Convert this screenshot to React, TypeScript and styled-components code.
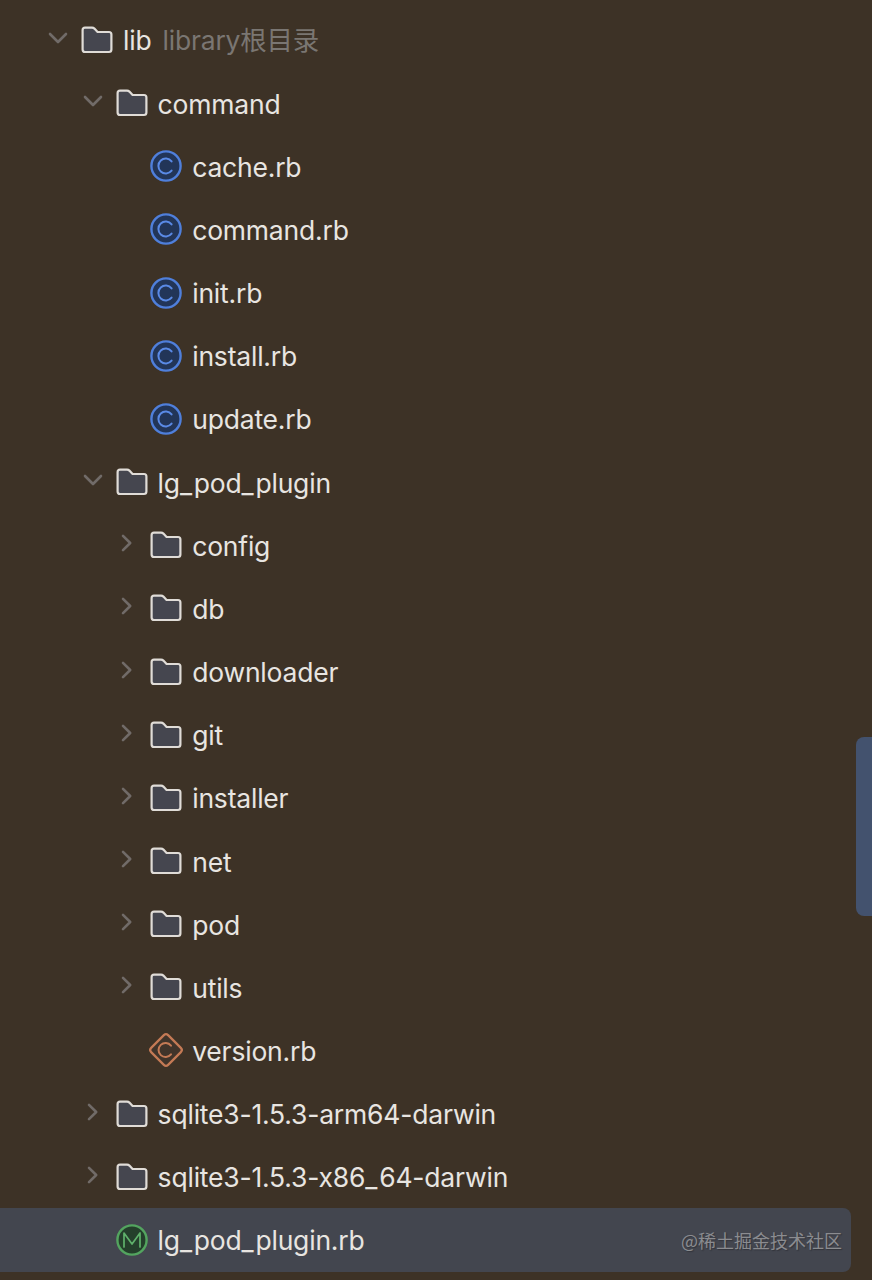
import React from "react";
import styled, { createGlobalStyle } from "styled-components";

const Global = createGlobalStyle`
  html, body { margin: 0; padding: 0; background: #3d3226; }
  #root { width: 872px; height: 1280px; }
`;

const Page = styled.div`
  position: relative;
  width: 872px;
  height: 1280px;
  overflow: hidden;
  background: #3d3226;
  padding-top: 8.4px;
  box-sizing: border-box;
  font-family: Inter, "Liberation Sans", "Noto Sans CJK SC", sans-serif;
`;

const List = styled.ul`
  margin: 0;
  padding: 0;
  list-style: none;
  display: flex;
  flex-direction: column;
`;

const Row = styled.li<{ $level: number; $selected?: boolean }>`
  display: flex;
  align-items: center;
  box-sizing: border-box;
  height: 63.16px;
  padding-left: ${(p) => 48 + p.$level * 34.6}px;
  margin-right: ${(p) => (p.$selected ? 21 : 0)}px;
  background: ${(p) => (p.$selected ? "#43464f" : "transparent")};
  border-radius: ${(p) => (p.$selected ? "0 8px 8px 0" : "0")};
`;

const ChevronSlot = styled.span`
  flex: 0 0 33px;
  width: 33px;
  height: 24px;
  display: flex;
  align-items: center;
  padding-bottom: 4px;
  box-sizing: border-box;
`;

const IconSlot = styled.span`
  flex: 0 0 32px;
  width: 32px;
  height: 36px;
  display: flex;
  align-items: center;
  justify-content: center;
  margin-right: 10px;
`;

const Name = styled.span`
  font-size: 26.5px;
  line-height: 36px;
  padding-top: 1px;
  color: #e8e5e1;
  letter-spacing: -0.2px;
  white-space: nowrap;
`;

const Underscore = styled.span`
  letter-spacing: 1.8px;
`;

const Hint = styled.span`
  font-size: 26.5px;
  line-height: 36px;
  padding-top: 1px;
  color: #7a7672;
  margin-left: 11px;
  letter-spacing: -0.2px;
  white-space: nowrap;
`;

const Scrollbar = styled.div`
  position: absolute;
  left: 856px;
  top: 737px;
  width: 16px;
  height: 179px;
  background: #43526e;
  border-radius: 8px 0 0 8px;
`;

const Watermark = styled.div`
  position: absolute;
  right: 30px;
  top: 1228px;
  font-size: 18px;
  line-height: 24px;
  color: #8b8c90;
  text-shadow: 1px 1px 1px rgba(30, 30, 35, 0.45);
  white-space: nowrap;
  font-family: "Noto Sans CJK SC", "Liberation Sans", sans-serif;
`;

const Chevron = ({ open }: { open: boolean }) => (
  <svg width="20" height="20" viewBox="0 0 20 20" fill="none" stroke="#716b68" strokeWidth="2.6" strokeLinecap="round" strokeLinejoin="round">
    {open ? <path d="M2 6 L10 14 L18 6" /> : <path d="M6 2.8 L13.2 10 L6 17.2" />}
  </svg>
);

const Folder = () => (
  <svg width="32" height="28" viewBox="0 0 32 28" fill="#45464f" stroke="#e0dcd7" strokeWidth="2.2" strokeLinejoin="round">
    <path d="M1.6 4 Q1.6 1.6 4 1.6 H11 Q12.4 1.6 13.4 2.6 L16.6 6 H28 Q30.4 6 30.4 8.4 V23.6 Q30.4 26 28 26 H4 Q1.6 26 1.6 23.6 Z" />
  </svg>
);

const ClassIcon = () => (
  <svg width="32" height="32" viewBox="0 0 32 32" fill="none">
    <circle cx="16" cy="16" r="14.6" fill="#223558" stroke="#4f7fdb" strokeWidth="2.4" />
    <path d="M21.6 11.4 A7.4 7.4 0 1 0 21.6 20.6" stroke="#5a8ae6" strokeWidth="2" strokeLinecap="round" />
  </svg>
);

const ConfigIcon = () => (
  <svg width="38" height="38" viewBox="0 0 38 38" fill="none" style={{ flex: "none", margin: "0 -3px" }}>
    <rect x="7" y="7" width="24" height="24" rx="3" transform="rotate(45 19 19)" fill="#40342a" stroke="#c47a55" strokeWidth="2.2" />
    <path d="M24 14.6 A7 7 0 1 0 24 23.4" stroke="#c47a55" strokeWidth="2" strokeLinecap="round" />
  </svg>
);

const ModuleIcon = () => (
  <svg width="32" height="32" viewBox="0 0 32 32" fill="none">
    <circle cx="16" cy="16" r="14.6" fill="#243f2b" stroke="#53a45f" strokeWidth="2.4" />
    <path d="M8 23 V9 L16 20 L24 9 V23" stroke="#5fb16b" strokeWidth="1.7" strokeLinejoin="round" strokeLinecap="round" />
  </svg>
);

type Kind = "folder" | "class" | "config" | "module";
type Item = { level: number; name: string; kind: Kind; open?: boolean; hint?: string; selected?: boolean };

const items: Item[] = [
  { level: 0, name: "lib", kind: "folder", open: true, hint: "library根目录" },
  { level: 1, name: "command", kind: "folder", open: true },
  { level: 2, name: "cache.rb", kind: "class" },
  { level: 2, name: "command.rb", kind: "class" },
  { level: 2, name: "init.rb", kind: "class" },
  { level: 2, name: "install.rb", kind: "class" },
  { level: 2, name: "update.rb", kind: "class" },
  { level: 1, name: "lg_pod_plugin", kind: "folder", open: true },
  { level: 2, name: "config", kind: "folder", open: false },
  { level: 2, name: "db", kind: "folder", open: false },
  { level: 2, name: "downloader", kind: "folder", open: false },
  { level: 2, name: "git", kind: "folder", open: false },
  { level: 2, name: "installer", kind: "folder", open: false },
  { level: 2, name: "net", kind: "folder", open: false },
  { level: 2, name: "pod", kind: "folder", open: false },
  { level: 2, name: "utils", kind: "folder", open: false },
  { level: 2, name: "version.rb", kind: "config" },
  { level: 1, name: "sqlite3-1.5.3-arm64-darwin", kind: "folder", open: false },
  { level: 1, name: "sqlite3-1.5.3-x86_64-darwin", kind: "folder", open: false },
  { level: 1, name: "lg_pod_plugin.rb", kind: "module", selected: true },
];

const icons: Record<Kind, React.ReactNode> = {
  folder: <Folder />,
  class: <ClassIcon />,
  config: <ConfigIcon />,
  module: <ModuleIcon />,
};

const renderName = (name: string) =>
  name.split("_").map((part, i) => (
    <React.Fragment key={i}>
      {i > 0 && <Underscore>_</Underscore>}
      {part}
    </React.Fragment>
  ));

export default function App() {
  return (
    <Page>
      <Global />
      <List>
        {items.map((it) => (
          <Row key={it.name + it.level} $level={it.level} $selected={it.selected}>
            <ChevronSlot>{it.open !== undefined && <Chevron open={it.open} />}</ChevronSlot>
            <IconSlot>{icons[it.kind]}</IconSlot>
            <Name>{renderName(it.name)}</Name>
            {it.hint && <Hint>{it.hint}</Hint>}
          </Row>
        ))}
      </List>
      <Scrollbar />
      <Watermark>@稀土掘金技术社区</Watermark>
    </Page>
  );
}
